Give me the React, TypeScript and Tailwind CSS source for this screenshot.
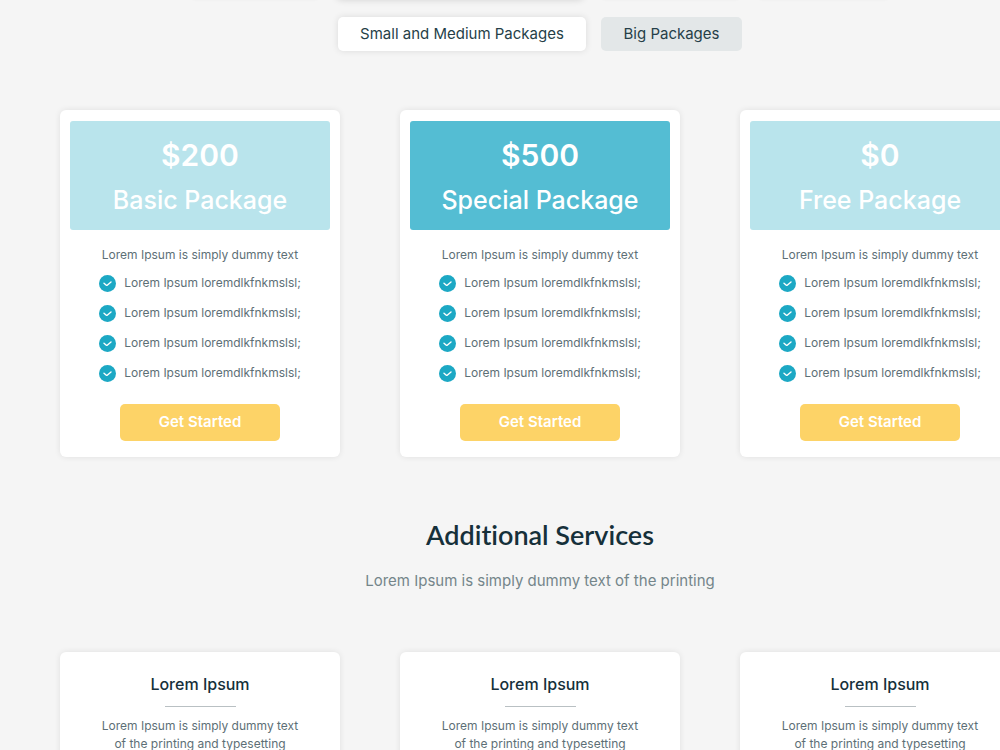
import React from "react";

type Plan = { price: string; name: string; featured?: boolean };

const plans: Plan[] = [
  { price: "$200", name: "Basic Package" },
  { price: "$500", name: "Special Package", featured: true },
  { price: "$0", name: "Free Package" },
];

const features = [1, 2, 3, 4];
const services = [1, 2, 3];

function CheckIcon() {
  return (
    <svg className="size-[17px] shrink-0" viewBox="0 0 16 16" aria-hidden="true">
      <circle cx="8" cy="8" r="8" fill="#1ca8c4" />
      <path
        d="M4.7 7.7 6.9 9.6Q7.3 9.9 7.7 9.6L11.3 6.6"
        fill="none"
        stroke="#fff"
        strokeWidth="1.3"
        strokeLinecap="round"
        strokeLinejoin="round"
      />
    </svg>
  );
}

function PlanCard({ plan }: { plan: Plan }) {
  return (
    <article className="flex flex-col items-center rounded-md bg-white px-2.5 pt-[11px] pb-4 shadow-[0_0_6px_rgba(0,0,0,0.09)]">
      <header
        className={
          plan.featured
            ? "flex w-full flex-col items-center rounded-[3px] bg-[#54bdd3] pt-4 pb-3 text-white"
            : "flex w-full flex-col items-center rounded-[3px] bg-[#b9e4ec] pt-4 pb-3 text-white"
        }
      >
        <p className="text-[30px] leading-9 font-semibold">{plan.price}</p>
        <h3 className="mt-[9px] text-[25px] leading-9 font-medium">{plan.name}</h3>
      </header>
      <p className="mt-4 text-xs leading-[18px] text-[#5d6f76]">Lorem Ipsum is simply dummy text</p>
      <ul className="mt-2.5 flex flex-col gap-3">
        {features.map((n) => (
          <li key={n} className="flex items-center gap-2 text-xs leading-[18px] text-[#5d6f76]">
            <CheckIcon />
            Lorem Ipsum loremdlkfnkmslsl;
          </li>
        ))}
      </ul>
      <button type="button" className="mt-[22px] h-[37px] w-40 rounded-[5px] bg-[#fdd367] text-[15px] font-semibold text-white">
        Get Started
      </button>
    </article>
  );
}

function ServiceCard() {
  return (
    <article className="flex flex-col items-center rounded-md bg-white px-9 pt-5 pb-8 text-center shadow-[0_0_6px_rgba(0,0,0,0.09)]">
      <h3 className="text-base leading-6 font-medium text-[#16303a]">Lorem Ipsum</h3>
      <hr className="mt-2.5 w-[71px] border-[#b9c0c3]" />
      <p className="mt-2.5 text-xs leading-[18px] text-[#5d6f76]">
        Lorem Ipsum is simply dummy text
        <br />
        of the printing and typesetting
      </p>
    </article>
  );
}

export default function App() {
  return (
    <main className="h-screen overflow-hidden bg-[#f5f5f5] font-['Inter',sans-serif]">
      <div className="flex min-w-[1080px] flex-col items-center">
        <div className="-mt-8 flex gap-4" aria-hidden="true">
          <div className="h-8 w-[130px] rounded-md bg-[#e4e8e9] shadow-[0_0_3px_rgba(0,0,0,0.04)]" />
          <div className="h-8 w-[248px] rounded-md bg-white shadow-[0_0_7px_rgba(0,0,0,0.14)]" />
          <div className="h-8 w-[141px] rounded-md bg-[#e4e8e9] shadow-[0_0_3px_rgba(0,0,0,0.04)]" />
          <div className="h-8 w-[133px] rounded-md bg-[#e4e8e9] shadow-[0_0_3px_rgba(0,0,0,0.04)]" />
        </div>
        <nav className="mt-[17px] flex gap-[15px] text-[15px] text-[#263f48]">
          <button type="button" className="h-[34px] w-[248px] rounded-[5px] bg-white shadow-[0_0_7px_rgba(0,0,0,0.11)]">
            Small and Medium Packages
          </button>
          <button type="button" className="h-[34px] w-[141px] rounded-[5px] bg-[#e3e7e8]">
            Big Packages
          </button>
        </nav>
        <section className="mt-[59px] grid grid-cols-[repeat(3,280px)] gap-[60px]">
          {plans.map((plan) => (
            <PlanCard key={plan.name} plan={plan} />
          ))}
        </section>
        <section className="mt-[60px] flex flex-col items-center">
          <h2 className="font-['Lato',sans-serif] text-[27px] leading-9 font-semibold text-[#16303a] [font-variant-ligatures:none]">
            Additional Services
          </h2>
          <p className="mt-4 text-[15px] leading-6 text-[#74858a]">Lorem Ipsum is simply dummy text of the printing</p>
          <div className="mt-[59px] grid grid-cols-[repeat(3,280px)] gap-[60px]">
            {services.map((n) => (
              <ServiceCard key={n} />
            ))}
          </div>
        </section>
      </div>
    </main>
  );
}
